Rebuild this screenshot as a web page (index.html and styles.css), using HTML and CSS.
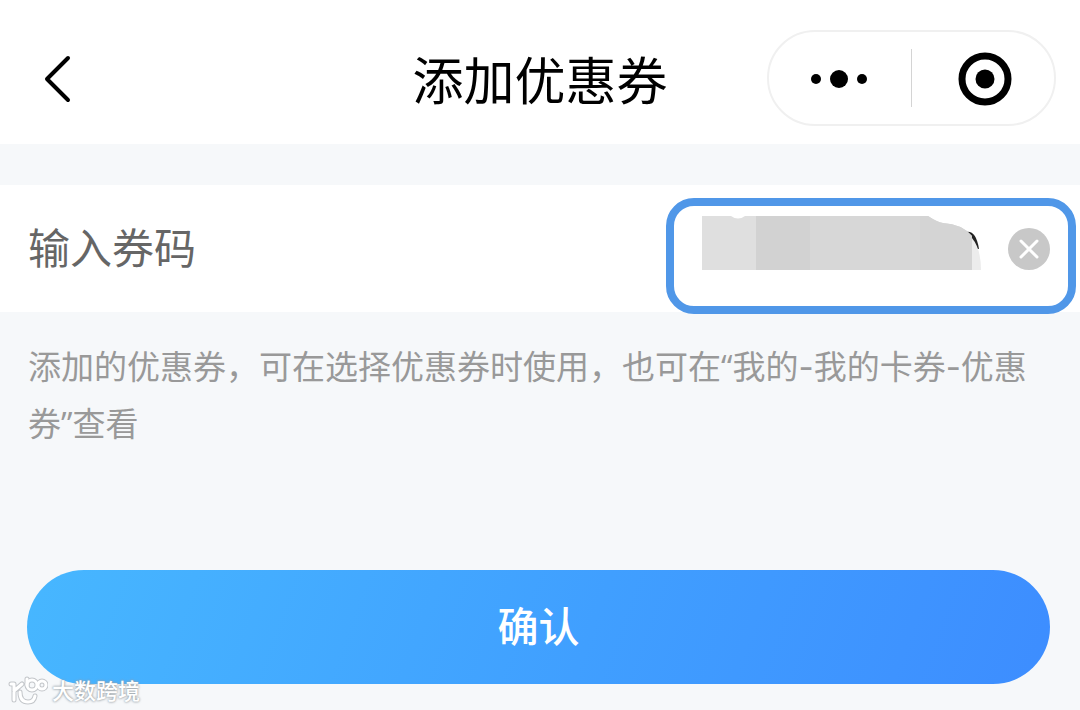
FILE: index.html
```html
<!DOCTYPE html>
<html lang="zh-CN">
<head>
<meta charset="utf-8">
<meta name="viewport" content="width=device-width, initial-scale=1">
<title>添加优惠券</title>
<link rel="stylesheet" href="styles.css">
</head>
<body>
<header class="navbar">
  <button class="icon-button back" type="button" aria-label="返回">
    <svg width="30" height="50" viewBox="0 0 30 50" fill="none" stroke="#000" stroke-width="4" stroke-linecap="round" stroke-linejoin="round"><path d="M26 5 5 26 26 47"/></svg>
  </button>
  <h1 class="title">添加优惠券</h1>
  <div class="capsule">
    <button class="icon-button capsule-part" type="button" aria-label="更多">
      <svg width="60" height="20" viewBox="0 0 60 20"><circle cx="6" cy="11" r="5"/><circle cx="29" cy="11" r="9"/><circle cx="52" cy="11" r="5"/></svg>
    </button>
    <span class="divider"></span>
    <button class="icon-button capsule-part" type="button" aria-label="关闭">
      <svg width="54" height="54" viewBox="0 0 54 54" overflow="visible"><circle cx="29" cy="28" r="23" fill="none" stroke="#000" stroke-width="7"/><circle cx="29" cy="28" r="9.5"/></svg>
    </button>
  </div>
</header>
<main>
  <form class="form">
    <div class="field">
      <label class="label" for="code">输入券码</label>
      <div class="entry">
        <input class="code" id="code" type="text">
        <svg class="mask" width="280" height="56" viewBox="0 0 280 56">
          <path d="M264 15Q274 13 277 32L270 31Z" fill="#222"/>
          <path d="M270 21Q279 32 279 53H270Z" fill="#ececec"/>
          <path d="M0 -1H29Q36 4 43 -1H54V53H0Z" fill="#dfdfdf"/>
          <path d="M54 -1H226Q235 5 241 6Q260 7 270 19V53H54Z" fill="#d7d7d7"/>
          <path d="M54 -1H108V53H54Z" fill="#d2d2d2"/>
          <path d="M218 -1H226Q235 5 241 6Q260 7 270 19V53H218Z" fill="#d4d4d4"/>
        </svg>
      </div>
      <button class="icon-button clear" type="reset" aria-label="清除">
        <svg width="42" height="42" viewBox="0 0 42 42"><circle cx="21" cy="21" r="21" fill="#c8c8c8"/><path d="M13 13 29 29M29 13 13 29" stroke="#fff" stroke-width="3" stroke-linecap="round"/></svg>
      </button>
      <span class="highlight"></span>
    </div>
    <p class="hint">添加的优惠券，可在选择优惠券时使用，也可在<span class="quote">“</span>我的-我的卡券-优惠券<span class="quote">”</span>查看</p>
    <button class="confirm" type="button">确认</button>
  </form>
</main>
<div class="watermark">
  <svg width="40" height="32" viewBox="0 0 40 32" fill="none" stroke-linecap="round" stroke-linejoin="round">
    <g stroke="#c3c6ca" stroke-width="5"><path d="M3 9H6V25M6 16 14 9M12 17Q12 27 20 27Q26 27 27 21M19 4V10"/><circle cx="24" cy="10" r="5"/><circle cx="34" cy="10" r="4"/></g>
    <g stroke="#fff" stroke-width="3"><path d="M3 9H6V25M6 16 14 9M12 17Q12 27 20 27Q26 27 27 21M19 4V10"/><circle cx="24" cy="10" r="5"/><circle cx="34" cy="10" r="4"/></g>
  </svg>
  <span>大数跨境</span>
</div>
</body>
</html>
```

FILE: styles.css
```css
* { box-sizing: border-box; }

body {
  margin: 0;
  min-height: 100vh;
  position: relative;
  background: #f6f8fa;
  font-family: Inter, "Noto Sans CJK SC", sans-serif;
}

button { font: inherit; }

.icon-button {
  display: flex;
  align-items: center;
  justify-content: center;
  padding: 0;
  border: 0;
  background: none;
}

.navbar {
  display: grid;
  grid-template-columns: 1fr auto 1fr;
  align-items: center;
  padding: 30px 24px 18px 42px;
  background: #fff;
}

.back { justify-self: start; }

.title {
  margin: 0;
  padding: 8px 18px 0 0;
  font-size: 51px;
  line-height: 60px;
  font-weight: 400;
  color: #000;
}

.capsule {
  justify-self: end;
  display: flex;
  align-items: center;
  width: 289px;
  height: 96px;
  border: 2px solid #f0f0f0;
  border-radius: 48px;
}

.capsule-part {
  flex: 1;
  height: 100%;
}

.divider {
  width: 1px;
  height: 58px;
  background: #d4d4d4;
}

.field {
  position: relative;
  display: flex;
  align-items: center;
  margin-top: 41px;
  padding: 32px 30px 31px 28px;
  background: #fff;
}

.label {
  flex: 1;
  font-size: 42px;
  line-height: 64px;
  color: #666;
}

.entry {
  position: relative;
  width: 280px;
  height: 64px;
  margin-right: 26px;
}

.code {
  width: 100%;
  height: 100%;
  padding: 0;
  border: 0;
  outline: 0;
  background: none;
  font: inherit;
  font-size: 42px;
}

.mask {
  position: absolute;
  top: 0;
  left: 0;
  overflow: visible;
}

.highlight {
  position: absolute;
  top: 13px;
  right: 4px;
  bottom: -2px;
  width: 410px;
  border: 8px solid #5097e8;
  border-radius: 28px;
  pointer-events: none;
}

.hint {
  margin: 0;
  padding: 27px 28px 0;
  font-size: 33px;
  line-height: 57px;
  color: #999;
}

.quote {
  font-family: "Open Sans", "Noto Sans", sans-serif;
  line-height: 1;
}

.confirm {
  display: block;
  width: calc(100% - 57px);
  margin: 117px 30px 26px 27px;
  padding: 25px;
  border: 0;
  border-radius: 57px;
  background: linear-gradient(110deg, #47b7ff, #409fff 55%, #3d8dff);
  color: #fff;
  font-size: 41px;
  line-height: 64px;
  font-weight: 500;
}

.watermark {
  position: absolute;
  left: 8px;
  bottom: 3px;
  display: flex;
  align-items: center;
  gap: 4px;
  font-size: 22px;
  line-height: 32px;
  font-weight: 500;
  color: #fff;
  text-shadow: 0 0 2px #9aa2a8, 0 0 3px #9aa2a8;
}
```
